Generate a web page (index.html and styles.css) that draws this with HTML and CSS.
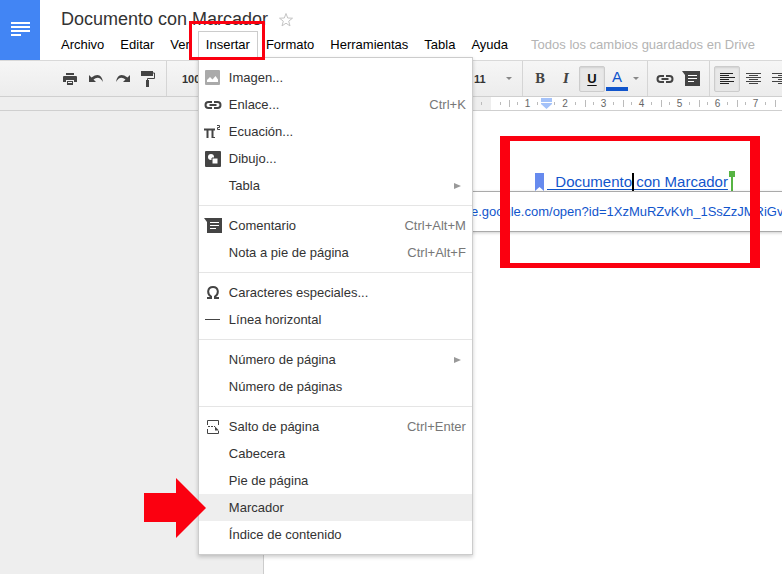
FILE: index.html
```html
<!DOCTYPE html>
<html lang="es">
<head>
<meta charset="utf-8">
<title>Documento con Marcador</title>
<link rel="stylesheet" href="styles.css">
</head>
<body>
<svg class="defs" aria-hidden="true">
  <symbol id="link" viewBox="0 0 18 10"><path d="M8 2H4.500a3 3 0 0 0 0 6H8M10 2h3.500a3 3 0 0 1 0 6H10M5.500 5h7" fill="none" stroke="#444" stroke-width="2"/></symbol>
  <symbol id="comment" viewBox="0 0 18 15"><path d="M0 0h18v15H3V4z" fill="#444"/><path d="M6 4.500h9M6 7.500h9M6 10.500h6" stroke="#fff" stroke-width="1"/></symbol>
  <symbol id="down" viewBox="0 0 6 3"><path d="M0 0h6L3 3z" fill="#888"/></symbol>
</svg>
<header class="header">
  <a class="logo" href="#" aria-label="Inicio de Documentos">
    <svg width="20" height="14" viewBox="0 0 20 14"><path d="M0 1h19M0 5h19M0 9h19M0 13h10" stroke="#fff" stroke-width="2"/></svg>
  </a>
  <div class="heading">
    <div class="title-row">
      <h1 class="title">Documento con Marcador</h1>
      <button class="star" aria-label="Destacar"><svg width="16" height="16" viewBox="0 0 16 16"><path d="M8 1.500l1.700 4.500 4.800.2-3.800 3 1.300 4.700L8 11.200l-4 2.700 1.300-4.700-3.800-3 4.800-.2z" fill="#fff" stroke="#c4c4c4"/></svg></button>
    </div>
    <nav class="menubar">
      <button class="tab">Archivo</button>
      <button class="tab">Editar</button>
      <button class="tab">Ver</button>
      <div class="open">
        <button class="tab tab-open" aria-expanded="true">Insertar</button>
        <div class="menu">
          <ul class="group">
            <li><button class="item"><span class="icon"><svg width="15" height="15" viewBox="0 0 15 15"><rect width="15" height="15" rx="1" fill="#aaa"/><path d="M2 12V10l3-3 2.500 2.500L10.500 6 13 9.500V12z" fill="#fff"/></svg></span><span>Imagen...</span></button></li>
            <li><button class="item"><span class="icon"><svg width="18" height="10"><use href="#link"/></svg></span><span>Enlace...</span><kbd>Ctrl+K</kbd></button></li>
            <li><button class="item"><span class="icon"><svg width="17" height="14" viewBox="0 0 17 14"><path d="M0 4.500h11M3.500 5v8M8.500 5v8" fill="none" stroke="#444" stroke-width="2"/><path d="M8 12.500h3" stroke="#444"/><path d="M13 .5h2.500v2h-2v2H16" fill="none" stroke="#444"/></svg></span><span>Ecuación...</span></button></li>
            <li><button class="item"><span class="icon"><svg width="16" height="16" viewBox="0 0 16 16"><rect width="16" height="16" rx="1" fill="#444"/><circle cx="6" cy="6" r="3" fill="#fff"/><path d="M7 7h6v6H7z" fill="#fff" stroke="#444"/></svg></span><span>Dibujo...</span></button></li>
            <li><button class="item"><span class="icon"></span><span>Tabla</span><svg class="sub" width="7" height="6" viewBox="0 0 7 6"><path d="M0 0l7 3-7 3z" fill="#999"/></svg></button></li>
          </ul>
          <ul class="group">
            <li><button class="item"><span class="icon"><svg width="18" height="15"><use href="#comment"/></svg></span><span>Comentario</span><kbd>Ctrl+Alt+M</kbd></button></li>
            <li><button class="item"><span class="icon"></span><span>Nota a pie de página</span><kbd>Ctrl+Alt+F</kbd></button></li>
          </ul>
          <ul class="group">
            <li><button class="item"><span class="icon"><svg width="12" height="13" viewBox="0 0 12 13"><path d="M0 12h4V10.500C0 8 0 1 6 1s6 7 2 9.500V12h4" fill="none" stroke="#444" stroke-width="2"/></svg></span><span>Caracteres especiales...</span></button></li>
            <li><button class="item"><span class="icon"><svg width="15" height="1"><path d="M0 .5h15" stroke="#444"/></svg></span><span>Línea horizontal</span></button></li>
          </ul>
          <ul class="group">
            <li><button class="item"><span class="icon"></span><span>Número de página</span><svg class="sub" width="7" height="6" viewBox="0 0 7 6"><path d="M0 0l7 3-7 3z" fill="#999"/></svg></button></li>
            <li><button class="item"><span class="icon"></span><span>Número de páginas</span></button></li>
          </ul>
          <ul class="group">
            <li><button class="item"><span class="icon"><svg width="12" height="14" viewBox="0 0 12 14"><path d="M.5 5V.5h11V5M.5 9v4.500h11V11" fill="none" stroke="#444"/><path d="M1 6.500h7" stroke="#444" stroke-dasharray="2 1"/><path d="M8 6.500l4 4H8z" fill="#444"/></svg></span><span>Salto de página</span><kbd>Ctrl+Enter</kbd></button></li>
            <li><button class="item"><span class="icon"></span><span>Cabecera</span></button></li>
            <li><button class="item"><span class="icon"></span><span>Pie de página</span></button></li>
            <li class="pointed"><button class="item active"><span class="icon"></span><span>Marcador</span></button>
              <svg class="arrow" width="62" height="60" viewBox="0 0 62 60"><path d="M0 15h32V0l30 30-30 30V44H0z" fill="#fb0010"/></svg></li>
            <li><button class="item"><span class="icon"></span><span>Índice de contenido</span></button></li>
          </ul>
        </div>
        <div class="mark mark-menu"></div>
      </div>
      <button class="tab">Formato</button>
      <button class="tab">Herramientas</button>
      <button class="tab">Tabla</button>
      <button class="tab">Ayuda</button>
      <span class="saved">Todos los cambios guardados en Drive</span>
    </nav>
  </div>
</header>

<div class="toolbar">
  <div class="tools tools-edit">
    <button class="tool" aria-label="Imprimir"><svg width="14" height="12" viewBox="0 0 14 12"><path d="M3 0h8v2H3zM1 3h12q1 0 1 1v5h-3V7H3v2H0V4q0-1 1-1z" fill="#444"/><path d="M4 8h6v4H4z" fill="#444"/><path d="M5 9h4v1H5z" fill="#f3f3f3"/></svg></button>
    <button class="tool" aria-label="Deshacer"><svg width="15" height="8" viewBox="0 0 15 8"><path d="M0 0v7h7L4.500 4.500Q10 0 14 7 12-4 2.500 2.500z" fill="#444"/></svg></button>
    <button class="tool" aria-label="Rehacer"><svg width="15" height="8" viewBox="0 0 15 8"><path d="M15 0v7H8l2.500-2.500Q5 0 1 7 3-4 12.500 2.500z" fill="#444"/></svg></button>
    <button class="tool" aria-label="Copiar formato"><svg width="14" height="16" viewBox="0 0 14 16"><path d="M0 0h12v5H0zM5 9h3v7H5z" fill="#444"/><path d="M12 2h1.500v5.500h-7V9" fill="none" stroke="#444"/></svg></button>
  </div>
  <div class="tools tools-font">
    <select class="pick" aria-label="Zoom"><option>100%</option></select>
    <div class="size">
      <select class="pick" aria-label="Tamaño de fuente"><option>11</option></select>
      <svg width="6" height="3"><use href="#down"/></svg>
    </div>
  </div>
  <div class="tools tools-style">
    <button class="tool letter" aria-label="Negrita">B</button>
    <button class="tool letter italic" aria-label="Cursiva">I</button>
    <button class="tool letter pressed under" aria-label="Subrayado">U</button>
    <button class="tool color" aria-label="Color de texto">A</button>
    <svg class="caret-down" width="6" height="3"><use href="#down"/></svg>
  </div>
  <div class="tools tools-insert">
    <button class="tool" aria-label="Insertar enlace"><svg width="18" height="10"><use href="#link"/></svg></button>
    <button class="tool" aria-label="Comentario"><svg width="18" height="15"><use href="#comment"/></svg></button>
  </div>
  <div class="tools tools-align">
    <button class="tool pressed" aria-label="Izquierda"><svg width="15" height="12" viewBox="0 0 15 12"><path d="M0 .5h13M0 2.500h9M0 4.500h15M0 6.500h9M0 8.500h14M0 10.500h9" stroke="#222"/></svg></button>
    <button class="tool" aria-label="Centrar"><svg width="15" height="12" viewBox="0 0 15 12"><path d="M0 .5h15M3 2.500h9M0 4.500h15M3 6.500h9M0 8.500h15M3 10.500h9" stroke="#444"/></svg></button>
    <button class="tool" aria-label="Derecha"><svg width="15" height="12" viewBox="0 0 15 12"><path d="M0 .5h15M6 2.500h9M0 4.500h15M6 6.500h9M0 8.500h15M6 10.500h9" stroke="#444"/></svg></button>
  </div>
</div>

<div class="ruler">
  <div class="ruler-margin"><i class="tick"></i></div>
  <div class="ruler-lead"><i class="tick"></i></div>
  <div class="unit"><i class="tick tall"></i><i class="tick"></i><span>1</span><i class="tick"></i></div>
  <div class="unit"><svg class="indent" width="11" height="11" viewBox="0 0 11 11"><path d="M0 0h11v4H0zM0 5h11v1L5.500 11 0 6z" fill="#a4c2f9"/></svg><i class="tick"></i><span>2</span><i class="tick"></i></div>
  <div class="unit"><i class="tick tall"></i><i class="tick"></i><span>3</span><i class="tick"></i></div>
  <div class="unit"><i class="tick tall"></i><i class="tick"></i><span>4</span><i class="tick"></i></div>
  <div class="unit"><i class="tick tall"></i><i class="tick"></i><span>5</span><i class="tick"></i></div>
  <div class="unit"><i class="tick tall"></i><i class="tick"></i><span>6</span><i class="tick"></i></div>
  <div class="unit"><i class="tick tall"></i><i class="tick"></i><span>7</span><i class="tick"></i></div>
  <i class="tick tall"></i>
</div>

<main class="workspace">
  <article class="page">
    <div class="line">
      <svg class="flag" width="9" height="18" viewBox="0 0 9 18"><path d="M0 0h9v18l-4.500-4L0 18z" fill="#668aee"/></svg>
      <a class="text" href="#">&nbsp;&nbsp;Documento<i class="cursor"></i> con Marcador</a>
      <svg class="pin" width="6" height="20" viewBox="0 0 6 20"><path d="M0 0h6v6H4v14H2V6H0z" fill="#57b443"/></svg>
      <div class="bubble"><a href="#">https://drive.google.com/open?id=1XzMuRZvKvh_1SsZzJMRiGv</a></div>
      <div class="mark mark-text"></div>
    </div>
  </article>
</main>
</body>
</html>
```
FILE: styles.css
```css
* { box-sizing: border-box; }

body {
  margin: 0;
  min-height: 100vh;
  display: flex;
  flex-direction: column;
  overflow: hidden;
  background: #eee;
  color: #333;
  font: 13px/16px "Liberation Sans", Arial, sans-serif;
}

button, select {
  margin: 0;
  padding: 0;
  border: 0;
  background: none;
  color: inherit;
  font: inherit;
}

svg { display: block; flex: none; }
.defs { position: absolute; width: 0; height: 0; }

/* Header */
.header { display: flex; height: 60px; background: #fff; }
.logo {
  display: flex;
  width: 40px;
  padding: 0 0 2px 11px;
  align-items: center;
  background: #4285f4;
}
.heading { flex: 1; padding: 8px 0 0 13px; }
.title-row { display: flex; align-items: center; gap: 10px; height: 23px; padding-left: 8px; }
.title { margin: 0; font-size: 18px; line-height: 23px; font-weight: 400; white-space: nowrap; }
.menubar { display: flex; height: 27px; color: #000; }
.tab { height: 27px; padding: 0 7px; border: 1px solid transparent; border-bottom: 0; white-space: nowrap; }
.open { position: relative; }
.tab-open { position: relative; z-index: 3; border-color: #ccc; background: #fff; }
.saved { padding-left: 15px; color: #b4b4b4; line-height: 27px; white-space: nowrap; }

/* Drop-down menu */
.menu {
  position: absolute;
  z-index: 2;
  top: 26px;
  left: 0;
  width: 275px;
  padding: 6px 0;
  border: 1px solid #ccc;
  background: #fff;
  box-shadow: 0 2px 4px rgba(0, 0, 0, .2);
}
.group { margin: 0; padding: 0; list-style: none; }
.group + .group { margin-top: 6px; padding-top: 6px; border-top: 1px solid #e5e5e5; }
.item {
  display: grid;
  grid-template-columns: 25px 1fr auto;
  align-items: center;
  width: 100%;
  height: 27px;
  padding: 0 6px 0 5px;
  color: #333;
  text-align: left;
}
.icon { display: flex; width: 18px; justify-content: center; }
.item kbd { color: #777; font: inherit; }
.sub { margin-right: 5px; }
.active { background: #eee; }
.pointed { position: relative; }
.arrow { position: absolute; top: -16px; left: -55px; }

/* Highlight frames */
.mark { position: absolute; z-index: 4; pointer-events: none; }
.mark-menu { top: -10px; left: -9px; width: 76px; height: 39px; border: 3px solid #fb0010; }
.mark-text { top: -36px; left: -35px; width: 260px; height: 132px; border: solid #fb0010; border-width: 5px 10px; }

/* Toolbar */
.toolbar {
  display: flex;
  height: 37px;
  border-top: 1px solid #d9d9d9;
  border-bottom: 1px solid #cfcfcf;
  background: linear-gradient(#f6f6f6, #ececec);
}
.tools { display: flex; flex: none; align-items: center; }
.tools + .tools { border-left: 1px solid #d5d5d5; }
.tool { display: flex; width: 26px; height: 26px; align-items: center; justify-content: center; }
.tools-edit { width: 166px; padding-left: 57px; }
.tools-font { width: 356px; padding: 0 10px 0 15px; justify-content: space-between; font-weight: 700; font-size: 11px; }
.pick { appearance: none; }
.size { display: flex; align-items: center; gap: 20px; }
.tools-style { width: 125px; padding-left: 4px; }
.tools-insert { width: 62px; padding-left: 4px; }
.tools-align { padding-left: 4px; }
.pressed { border: 1px solid #ccc; border-radius: 2px; background: #e8e8e8; box-shadow: inset 0 1px 2px rgba(0, 0, 0, .1); }
.letter { color: #444; font: 700 12px/16px "DejaVu Serif", serif; }
.italic { font-style: italic; }
.under { color: #111; font-family: "Liberation Sans", Arial, sans-serif; font-size: 13px; text-decoration: underline; text-underline-offset: 2px; }
.color { width: 22px; height: 24px; margin-left: 1px; border-bottom: 4px solid #15c; color: #15c; font-size: 15px; }
.caret-down { margin-left: 5px; }

/* Ruler */
.ruler {
  display: flex;
  align-items: center;
  height: 14px;
  overflow: hidden;
  border-bottom: 1px solid #cfcfcf;
  background: #fff;
  color: #666;
  font-size: 10px;
  line-height: 13px;
}
.ruler > div { display: flex; flex: none; align-items: center; height: 13px; }
.ruler-margin { width: 491px; padding-right: 9px; justify-content: flex-end; background: #eee; }
.ruler-lead { width: 18px; padding-left: 9px; }
.unit { width: 38px; justify-content: space-between; padding-right: 9px; }
.tick { width: 1px; height: 3px; background: #bbb; }
.tall { height: 7px; }
.indent { margin: 0 -5px 0 -6px; }

/* Document */
.workspace { display: flex; flex: 1; padding-left: 263px; }
.page { flex: 1; padding: 61px 0 0 271px; border-left: 1px solid #ccc; background: #fff; }
.line { position: relative; display: flex; align-items: flex-start; height: 20px; }
.flag { margin: 1px 3px 0 0; }
.text {
  color: #15c;
  font-size: 15px;
  line-height: 20px;
  white-space: pre;
  text-underline-offset: 2px;
}
.cursor { position: relative; z-index: 1; display: inline-block; width: 2px; height: 18px; margin: 0 -2px 0 0; background: #000; vertical-align: -4px; }
.pin { margin: -1px 0 0 1px; }
.bubble {
  position: absolute;
  top: 19px;
  left: -140px;
  right: -20px;
  height: 41px;
  padding: 0 0 0 15px;
  overflow: hidden;
  border: 1px solid #aaa;
  background: #fff;
  box-shadow: 0 1px 3px rgba(0, 0, 0, .2);
  line-height: 39px;
  white-space: nowrap;
}
.bubble a { color: #15c; text-decoration: none; }
```
